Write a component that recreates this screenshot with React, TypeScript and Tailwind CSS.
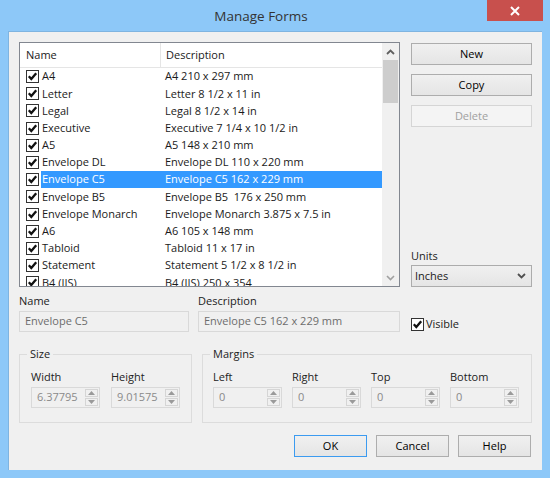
import React from "react";

const rows: [string, string][] = [
  ["A4", "A4 210 x 297 mm"],
  ["Letter", "Letter 8 1/2 x 11 in"],
  ["Legal", "Legal 8 1/2 x 14 in"],
  ["Executive", "Executive 7 1/4 x 10 1/2 in"],
  ["A5", "A5 148 x 210 mm"],
  ["Envelope DL", "Envelope DL 110 x 220 mm"],
  ["Envelope C5", "Envelope C5 162 x 229 mm"],
  ["Envelope B5", "Envelope B5\u00a0 176 x 250 mm"],
  ["Envelope Monarch", "Envelope Monarch 3.875 x 7.5 in"],
  ["A6", "A6 105 x 148 mm"],
  ["Tabloid", "Tabloid 11 x 17 in"],
  ["Statement", "Statement 5 1/2 x 8 1/2 in"],
  ["B4 (JIS)", "B4 (JIS) 250 x 354"],
];

function Check() {
  return (
    <span className="w-[13px] h-[13px] shrink-0 border border-[#333] bg-white flex items-center justify-center">
      <svg width="11" height="11" viewBox="0 0 11 11">
        <path d="M1.8 5.3 L4.3 8 L9.2 2.2" fill="none" stroke="#111" strokeWidth="2.3" />
      </svg>
    </span>
  );
}

function Button({ label, disabled, primary }: { label: string; disabled?: boolean; primary?: boolean }) {
  return (
    <div
      className={`h-[22px] flex items-center justify-center border ${
        disabled
          ? "border-[#d5d5d5] bg-[#f4f4f4] text-[#a0a0a0]"
          : primary
          ? "border-[#3c9bf0] bg-gradient-to-b from-[#f0f0f0] to-[#e5e5e5] text-black"
          : "border-[#adadad] bg-gradient-to-b from-[#f0f0f0] to-[#e5e5e5] text-black"
      }`}
    >
      {label}
    </div>
  );
}

function Spinner({ value }: { value: string }) {
  return (
    <div className="w-[69px] h-[21px] flex border border-[#d9d9d9] bg-[#f0f0f0]">
      <div className="flex-1 pl-[5px] flex items-center text-[#8a8a8a]">{value}</div>
      <div className="w-[15px] flex flex-col gap-[1px] p-[1px]">
        <div className="flex-1 border border-[#d5d5d5] flex items-center justify-center">
          <svg width="7" height="4" viewBox="0 0 7 4">
            <path d="M0 4 L3.5 0 L7 4 Z" fill="#9a9a9a" />
          </svg>
        </div>
        <div className="flex-1 border border-[#d5d5d5] flex items-center justify-center">
          <svg width="7" height="4" viewBox="0 0 7 4">
            <path d="M0 0 L3.5 4 L7 0 Z" fill="#9a9a9a" />
          </svg>
        </div>
      </div>
    </div>
  );
}

function Field({ label, value }: { label: string; value: string }) {
  return (
    <div className="flex flex-col">
      <span className="h-[16px] leading-[16px] text-[#222]">{label}</span>
      <div className="mt-[2px]">
        <Spinner value={value} />
      </div>
    </div>
  );
}

export default function App() {
  return (
    <div
      className="w-[550px] h-[478px] bg-[#8dc8f8] flex flex-col text-[11px] text-[#1a1a1a]"
      style={{ fontFamily: '"Open Sans", "Noto Sans", sans-serif' }}
    >
      <div className="h-[31px] relative flex items-center justify-center pr-[28px]">
        <span className="text-[13.5px] text-[#333] mt-[1px]">Manage Forms</span>
        <div className="absolute right-[7px] top-0 w-[56px] h-[21px] bg-[#c8504d] flex items-center justify-center">
          <svg width="10" height="10" viewBox="0 0 10 10">
            <path d="M1 1 L9 9 M9 1 L1 9" stroke="white" strokeWidth="2" />
          </svg>
        </div>
      </div>
      <div className="mx-[8px] h-[439px] bg-[#f0f0f0] border-l border-t border-[#7fb4e0] flex flex-col px-[10px] pt-[10px]">
        <div className="flex">
          <div className="w-[381px] h-[245px] border border-[#828790] bg-white flex overflow-hidden">
            <div className="flex-1 flex flex-col overflow-hidden">
              <div className="h-[25px] shrink-0 flex border-b border-[#e5e5e5]">
                <div className="w-[141px] pl-[6px] flex items-center border-r border-[#e5e5e5]">Name</div>
                <div className="flex-1 pl-[5px] flex items-center">Description</div>
              </div>
              {rows.map(([name, desc], i) => {
                const sel = i === 6;
                return (
                  <div key={name} className="h-[17.2px] shrink-0 flex items-center">
                    <div className="w-[21px] pl-[6px] flex items-center shrink-0">
                      <Check />
                    </div>
                    <div className={`flex-1 h-full flex items-center ${sel ? "bg-[#3399ff] text-white" : ""}`}>
                      <div className="w-[124px] pl-[1px] whitespace-nowrap">{name}</div>
                      <div className="flex-1 whitespace-nowrap">{desc}</div>
                    </div>
                  </div>
                );
              })}
            </div>
            <div className="w-[17px] shrink-0 bg-[#f0f0f0] flex flex-col">
              <div className="h-[17px] flex items-center justify-center">
                <svg width="9" height="6" viewBox="0 0 9 6">
                  <path d="M1 5 L4.5 1.5 L8 5" fill="none" stroke="#606060" strokeWidth="1.8" />
                </svg>
              </div>
              <div className="h-[43px] mx-[1px] bg-[#cdcdcd]"></div>
              <div className="flex-1"></div>
              <div className="h-[17px] flex items-center justify-center">
                <svg width="9" height="6" viewBox="0 0 9 6">
                  <path d="M1 1 L4.5 4.5 L8 1" fill="none" stroke="#a0a0a0" strokeWidth="1.6" />
                </svg>
              </div>
            </div>
          </div>
          <div className="ml-[11px] w-[121px] flex flex-col pt-[1px]">
            <Button label="New" />
            <div className="mt-[9px]">
              <Button label="Copy" />
            </div>
            <div className="mt-[9px]">
              <Button label="Delete" disabled />
            </div>
            <div className="mt-auto text-[#222] leading-[16px]">Units</div>
            <div className="mt-[1px] h-[22px] border border-[#acacac] bg-gradient-to-b from-[#f0f0f0] to-[#e5e5e5] flex items-center pl-[3px] pr-[5px]">
              <span className="flex-1">Inches</span>
              <svg width="9" height="6" viewBox="0 0 9 6">
                <path d="M1 1 L4.5 4.5 L8 1" fill="none" stroke="#505050" strokeWidth="1.8" />
              </svg>
            </div>
          </div>
        </div>

        <div className="flex mt-[6px]">
          <div className="w-[170px] flex flex-col">
            <span className="h-[16px] leading-[16px] text-[#222]">Name</span>
            <div className="mt-[2px] h-[21px] border border-[#d9d9d9] flex items-center pl-[5px] text-[#6d6d6d]">
              Envelope C5
            </div>
          </div>
          <div className="ml-[9px] w-[202px] flex flex-col">
            <span className="h-[16px] leading-[16px] text-[#222]">Description</span>
            <div className="mt-[2px] h-[21px] border border-[#d9d9d9] flex items-center pl-[5px] text-[#6d6d6d]">
              Envelope C5 162 x 229 mm
            </div>
          </div>
          <div className="ml-[11px] flex items-end pb-[1px] gap-[2px]">
            <Check />
            <span className="leading-[14px]">Visible</span>
          </div>
        </div>

        <div className="flex mt-[15px]">
          <fieldset className="w-[171px] h-[76px] border border-[#dcdcdc] px-[11px] pb-[10px]">
            <legend className="ml-[-4px] px-[3px] text-[#222] leading-[14px]">Size</legend>
            <div className="flex gap-[11px] mt-[8px]">
              <Field label="Width" value="6.37795" />
              <Field label="Height" value="9.01575" />
            </div>
          </fieldset>
          <fieldset className="ml-[10px] w-[333px] h-[76px] border border-[#dcdcdc] px-[10px] pb-[10px]">
            <legend className="ml-[-3px] px-[3px] text-[#222] leading-[14px]">Margins</legend>
            <div className="flex gap-[10px] mt-[8px]">
              <Field label="Left" value="0" />
              <Field label="Right" value="0" />
              <Field label="Top" value="0" />
              <Field label="Bottom" value="0" />
            </div>
          </fieldset>
        </div>

        <div className="flex justify-end mt-[12px] gap-[9px] pr-[1px]">
          <div className="w-[73px]">
            <Button label="OK" primary />
          </div>
          <div className="w-[73px]">
            <Button label="Cancel" />
          </div>
          <div className="w-[73px]">
            <Button label="Help" />
          </div>
        </div>
      </div>
    </div>
  );
}
